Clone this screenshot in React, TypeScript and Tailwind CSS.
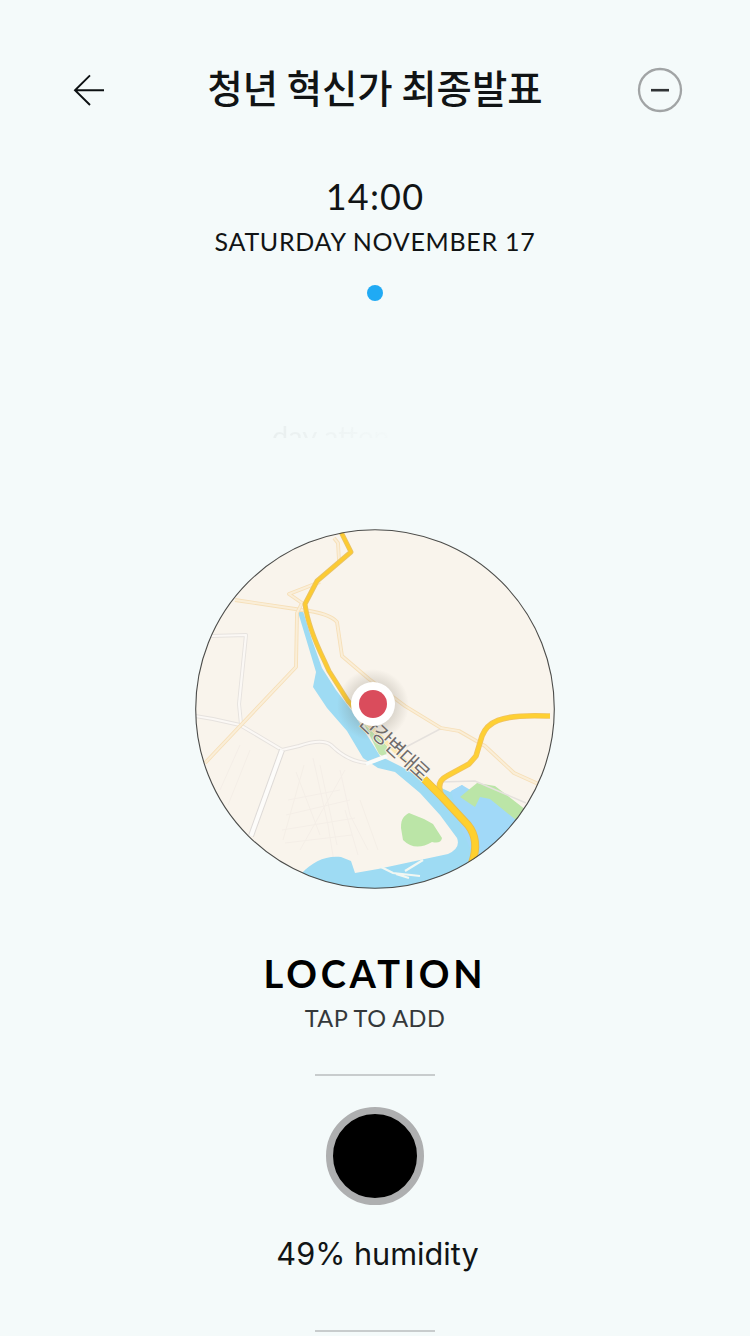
import React from "react";

const LATO = "font-['Lato','Noto_Sans_CJK_KR',sans-serif]";

function BackIcon() {
  return (
    <svg width="32" height="34" viewBox="0 0 32 34" fill="none" stroke="#0c1012" strokeWidth="1.9">
      <path d="M31 17.3H2M17 2.3L2 17.3L17 32" />
    </svg>
  );
}

function MinusIcon() {
  return (
    <svg width="46" height="46" viewBox="0 0 46 46" fill="none">
      <circle cx="23" cy="23" r="21" stroke="#a1a4a5" strokeWidth="2.3" />
      <path d="M14 23.2H32" stroke="#303335" strokeWidth="2.6" />
    </svg>
  );
}

function Road({ d, edge, fill, w }: { d: string; edge: string; fill: string; w: number }) {
  return (
    <g fill="none" strokeLinejoin="round">
      <path d={d} stroke={edge} strokeWidth={w} />
      <path d={d} stroke={fill} strokeWidth={w - 1.8} />
    </g>
  );
}

const minor = { edge: "#e6e2de", fill: "#fbf8f5", w: 4 };
const middle = { edge: "#f6dfb8", fill: "#faeed8", w: 3.8 };

function LocationMap() {
  return (
    <svg width="360" height="362" viewBox="195 528 360 362" className="block">
      <defs>
        <clipPath id="disc">
          <circle cx="375" cy="709" r="179.5" />
        </clipPath>
        <radialGradient id="pinShade">
          <stop offset="0.6" stopColor="#6b6455" stopOpacity="0.2" />
          <stop offset="1" stopColor="#6b6455" stopOpacity="0" />
        </radialGradient>
      </defs>
      <g clipPath="url(#disc)">
        <rect x="190" y="520" width="370" height="375" fill="#f9f4ec" />
        <g stroke="#f4eee7" strokeWidth="1" fill="none">
          <path d="M304 765L283 840M313 758L328 825L334 862M320 765L337 845M296 772L320 835M288 800L340 790M286 815L350 800M282 830L355 818M285 843L352 835M340 770L350 815L368 850M345 810L358 855M360 800L378 850M300 850L345 770M240 745L220 790M250 750L228 805" />
        </g>

        <path
          d="M298 612L303 611L312 640L322 668L336 690L352 711L367 735L380 756L400 766L424 780L450 792L462 785L470 795L485 792L530 830L520 860L470 890L300 895L302 873C312 862 326 855 341 857L351 861L355 873L378 869L448 854Q461 848 457 838L440 815L420 793L395 772L378 768L363 758L347 731L327 708L313 687L316 672Z"
          fill="#9edbf3"
        />
        <path d="M451 791L462 785L472 791L482 790L505 803L530 818L520 850L480 870L462 830Z" fill="#a1d9f8" />
        <path d="M460 797L477 783L495 786L526 810L516 820L490 799L480 797L475 807Z" fill="#bbe5a7" />
        <path d="M364 724L387 746L386 758L379 754Z" fill="#c2e5ae" />
        <path d="M401 828C401 818 404 816 409 813L424 819L433 824L442 838Q441 844 432 842Q415 852 403 840Z" fill="#bbe5a7" />

        <Road d="M195 716L213 719L240 725L282 750L299 746Q322 738 331 745Q348 762 368 763L386 756" {...minor} />
        <Road d="M211 636L246 635L239 704L241 724" {...minor} />
        <path d="M251 836L282 750" stroke="#dedad7" strokeWidth="6" />
        <path d="M251 836L282 750" stroke="#fdfcfa" strokeWidth="4" />
        <path d="M366 764L387 756" stroke="#fafcfa" strokeWidth="4" />
        <path d="M406 747L440 729L449 729M440 782L475 781L526 803" fill="none" stroke="#e5e1dd" strokeWidth="1.5" />
        <path d="M381 867L393 873L420 876M405 871L423 860M396 874L409 878" fill="none" stroke="#f2f7f2" strokeWidth="2.2" />

        <Road d="M334 538L338 543L339 561" {...middle} />
        <Road d="M235 600L302 610Q329 613 337 622L342 656L369 679L405 706L441 728L459 731L485 746L514 773L545 787" {...middle} />
        <Road d="M320 582L289 594L302 603L297 613L296 667L241 725L205 763" {...middle} />

        <Road d="M340 530L351 552L317 581L305 604Q308 627 324 660L329 671L348 701L366 721" edge="#e8c267" fill="#fccb32" w={5} />
        <path d="M366 722L424 780" stroke="#fbe9b4" strokeWidth="4" />
        <Road d="M550 716H547C498 714 487 723 482 736L476 756L469 764L447 776Q435 782 442 796" edge="#f1c35d" fill="#fed034" w={5.6} />
        <Road d="M424 779L442 797L468 825Q480 840 472 863" edge="#e9bd4d" fill="#ffd02e" w={8} />

        <g
          fontFamily="'Noto Sans CJK KR', sans-serif"
          fontSize="20"
          fill="#706c6a"
          stroke="#faf6ef"
          strokeWidth="1.5"
          paintOrder="stroke"
          textAnchor="middle"
        >
          <text transform="translate(369 724) rotate(43)" y="7">안</text>
          <text transform="translate(382 736) rotate(43)" y="7">강</text>
          <text transform="translate(395 748) rotate(43)" y="7">변</text>
          <text transform="translate(408 760) rotate(43)" y="7">대</text>
          <text transform="translate(420 771) rotate(43)" y="7">로</text>
        </g>

        <circle cx="373" cy="705" r="36" fill="url(#pinShade)" />
        <circle cx="373" cy="704" r="22" fill="#fff" />
        <circle cx="373" cy="704" r="14" fill="#da4c5c" />
      </g>
      <circle cx="375" cy="709" r="179.3" fill="none" stroke="#4b4c4a" strokeWidth="1.1" />
    </svg>
  );
}

export default function App() {
  return (
    <div className="flex h-[1336px] w-[750px] flex-col items-center overflow-hidden bg-[#f4fafa] text-[#111415]">
      <header className="mt-[60px] flex h-[60px] w-full items-center justify-between pl-[73px] pr-[67px]">
        <button className="flex h-[60px] w-[46px] items-center" aria-label="Back">
          <BackIcon />
        </button>
        <h1 className="mb-[9px] mr-[6px] whitespace-nowrap font-['Noto_Sans_CJK_KR',sans-serif] text-[38.4px] font-medium leading-[56px]">
          청년 혁신가 최종발표
        </h1>
        <button className="flex h-[60px] w-[46px] items-center" aria-label="Remove">
          <MinusIcon />
        </button>
      </header>

      <section className={`flex flex-col items-center ${LATO}`}>
        <time className="mt-[54px] text-[36px] leading-[44px] tracking-[1.2px]">14:00</time>
        <p className="mt-[5px] whitespace-nowrap text-[25px] leading-[36px] tracking-[0.7px]">SATURDAY NOVEMBER 17</p>
        <span className="mt-[26px] h-4 w-4 rounded-full bg-[#20aaf4]" />
      </section>

      <div className={`mt-[117px] h-[20px] w-[206px] overflow-hidden ${LATO}`}>
        <p className="bg-linear-to-r from-[#e9efef] to-[#f4fafa] to-65% bg-clip-text text-[29px] leading-[36px] text-transparent">
          day atten
        </p>
      </div>

      <section className={`mt-[90px] flex flex-col items-center ${LATO}`}>
        <LocationMap />
        <h2 className="mt-[59px] text-[38px] font-bold leading-[48px] tracking-[3.8px] text-black">LOCATION</h2>
        <p className="mt-[3px] text-[23.5px] leading-[36px] tracking-[0.5px] text-[#34383a]">TAP TO ADD</p>
      </section>

      <hr className="mt-[38px] h-[2px] w-[120px] border-0 bg-[#c8cccd]" />

      <section className="flex flex-col items-center">
        <div className="mt-[31px] h-[98px] w-[98px] rounded-full border-[7px] border-[#aeafb0] bg-black" />
        <p className="mt-[28px] pl-[5px] font-['Inter',sans-serif] text-[30.7px] leading-[42px]">49% humidity</p>
      </section>

      <hr className="mt-[55px] h-[2px] w-[120px] shrink-0 border-0 bg-[#c8cccd]" />
    </div>
  );
}
